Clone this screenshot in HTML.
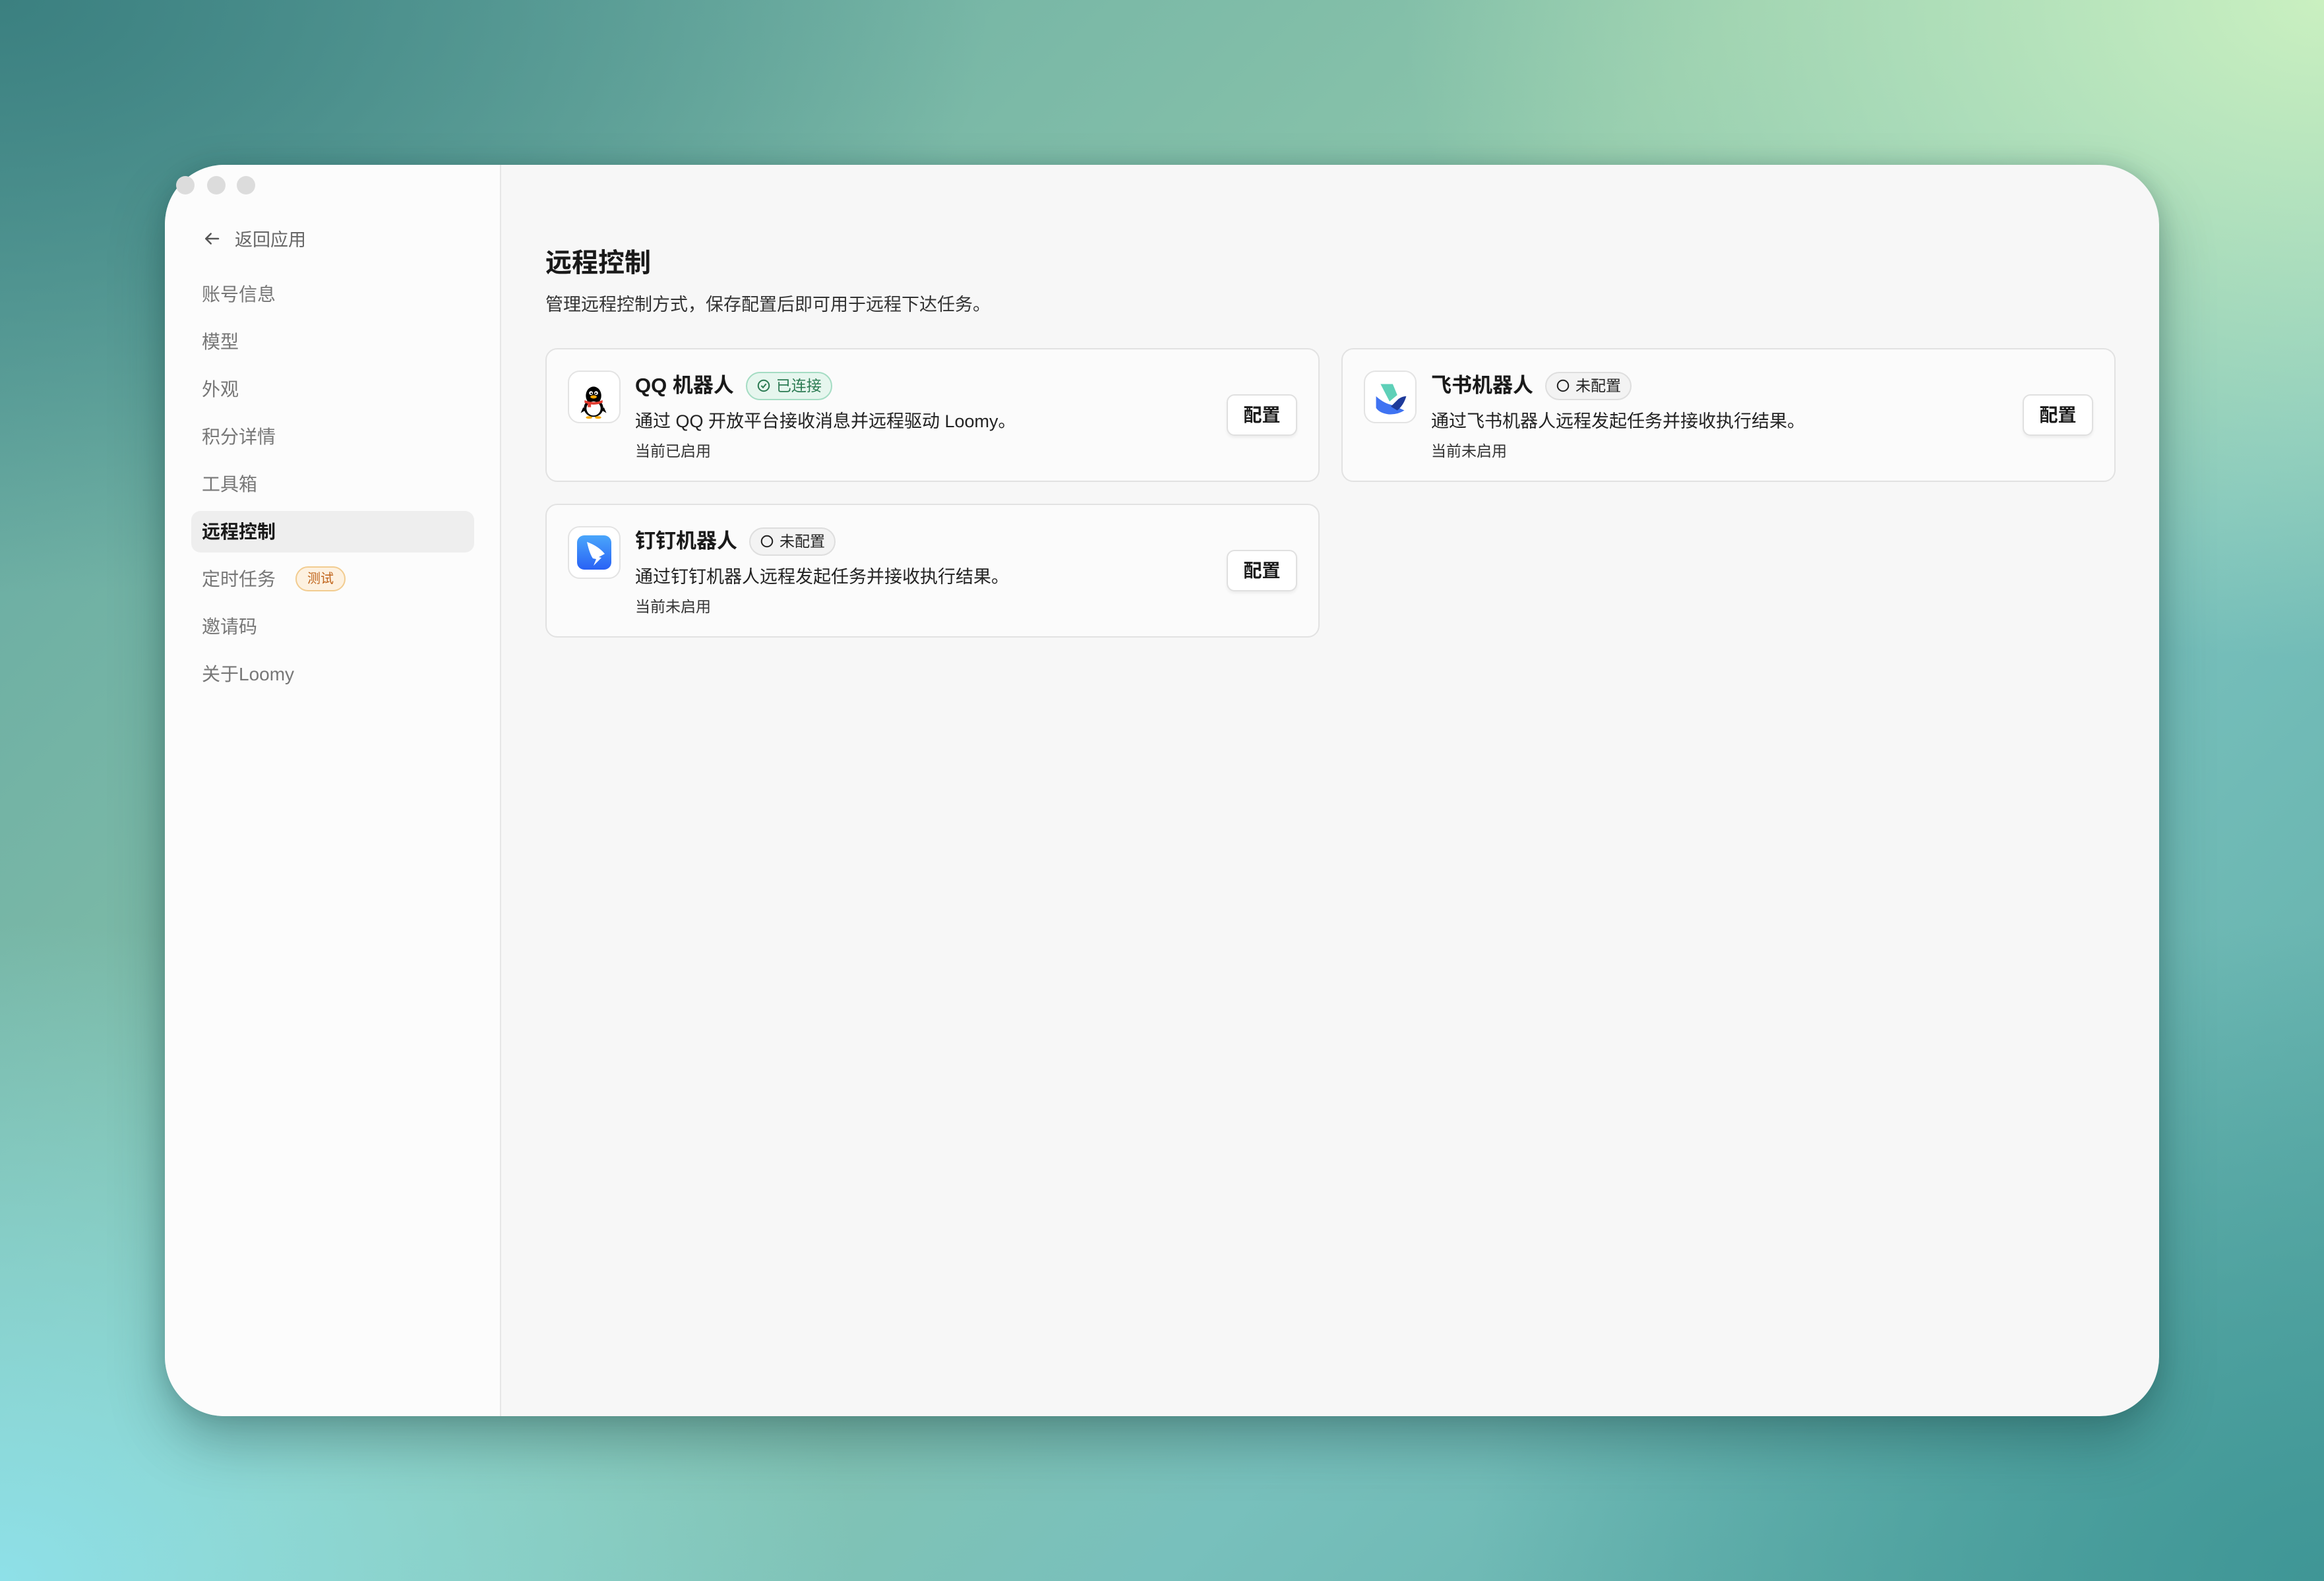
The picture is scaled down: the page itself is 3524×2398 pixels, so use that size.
<!DOCTYPE html>
<html><head><meta charset="utf-8"><style>
*{margin:0;padding:0;box-sizing:border-box}
html,body{width:3524px;height:2398px;overflow:hidden}
body{font-family:"Liberation Sans","Noto Sans CJK SC",sans-serif;position:relative;
background:
radial-gradient(ellipse 1400px 1000px at 3524px 0px,#caf0c0 0%,rgba(202,240,192,0) 100%),
radial-gradient(ellipse 1300px 1000px at 0px 2398px,#8ee0e8 0%,rgba(142,224,232,0) 100%),
radial-gradient(ellipse 1300px 1000px at 3524px 2398px,#3f9696 0%,rgba(63,150,150,0) 100%),
radial-gradient(ellipse 1500px 900px at 0px 0px,#3b8080 0%,rgba(59,128,128,0) 100%),
linear-gradient(135deg,#5fa4a0 0%,#8cc6ab 45%,#78c0bc 70%,#5aaaa4 100%);}
.win{position:absolute;left:250px;top:250px;width:3024px;height:1898px;border-radius:90px;overflow:hidden;background:#f7f7f7;box-shadow:0 40px 80px rgba(20,60,60,.35),0 0 30px rgba(20,60,60,.2)}
.side{position:absolute;left:0;top:0;width:510px;height:100%;background:#fcfcfc;border-right:2px solid #e6e6e6}
.dot{position:absolute;top:267px;width:28px;height:28px;border-radius:50%;background:#dcdcdc}
.back{position:absolute;left:56px;top:92px;font-size:27px;color:#666;display:flex;align-items:center;gap:20px}
.item{position:absolute;left:56px;font-size:28px;color:#777;line-height:40px}
.active{position:absolute;left:40px;top:525px;width:429px;height:63px;border-radius:14px;background:#eeeeee}
.tb{display:inline-block;margin-left:30px;font-size:20px;color:#c0641a;background:#fdf1e0;border:2px solid #f2cc90;border-radius:20px;padding:0 16px;line-height:34px;vertical-align:middle;position:relative;top:-3px}
h1{position:absolute;left:577px;top:116px;font-size:40px;color:#1a1a1a;font-weight:bold}
.sub{position:absolute;left:577px;top:190px;font-size:27px;color:#333}
.card{position:absolute;width:1174px;height:203px;border:2px solid #e2e2e2;border-radius:18px;background:#fbfbfb}
.ic{position:absolute;left:32px;top:32px;width:80px;height:80px;border:2px solid #e3e3e3;border-radius:18px;background:#fff;overflow:hidden}
.name{position:absolute;left:134px;top:32px;font-size:31px;color:#1a1a1a;font-weight:600;line-height:46px;display:flex;align-items:center}
.badge{margin-left:18px;font-size:23px;font-weight:normal;border-radius:24px;padding:0 14px;line-height:39px;display:flex;align-items:center;gap:8px}
.ok{background:#e6f6ee;border:2px solid #a4dcc3;color:#2b7a52}
.no{background:#f3f3f3;border:2px solid #dedede;color:#222}
.desc{position:absolute;left:134px;top:87px;font-size:27px;color:#222}
.st{position:absolute;left:134px;top:135px;font-size:23px;color:#333}
.btn{position:absolute;right:32px;top:68px;width:107px;height:63px;border:2px solid #e0e0e0;border-radius:12px;background:#fff;box-shadow:0 3px 5px rgba(0,0,0,.06);font-size:28px;font-weight:bold;color:#1a1a1a;text-align:center;line-height:59px}
</style></head><body>
<div class="win">
 <div class="side">
  <div class="back"><svg width="30" height="30" viewBox="0 0 24 24" fill="none" stroke="#555" stroke-width="2" stroke-linecap="round" stroke-linejoin="round"><path d="M20 12H5M11 6l-6 6 6 6"/></svg><span>返回应用</span></div>
  <div class="active"></div>
  <div class="item" style="top:177px">账号信息</div>
  <div class="item" style="top:249px">模型</div>
  <div class="item" style="top:321px">外观</div>
  <div class="item" style="top:393px">积分详情</div>
  <div class="item" style="top:465px">工具箱</div>
  <div class="item" style="top:537px;color:#1a1a1a;font-weight:600">远程控制</div>
  <div class="item" style="top:609px">定时任务<span class="tb">测试</span></div>
  <div class="item" style="top:681px">邀请码</div>
  <div class="item" style="top:753px">关于Loomy</div>
 </div>
 <h1>远程控制</h1>
 <div class="sub">管理远程控制方式，保存配置后即可用于远程下达任务。</div>

 <div class="card" style="left:577px;top:278px">
  <div class="ic"><svg width="78" height="78" viewBox="0 0 80 80">
   <ellipse cx="38" cy="56" rx="15" ry="14" fill="#000"/>
   <ellipse cx="38" cy="37" rx="12" ry="14" fill="#000"/>
   <ellipse cx="38" cy="57" rx="11" ry="11" fill="#fff"/>
   <path d="M22 55 L18 64 L25 60Z M54 55 L58 64 L51 60Z" fill="#000"/>
   <circle cx="34" cy="33" r="3" fill="#fff"/><circle cx="42" cy="33" r="3" fill="#fff"/>
   <circle cx="34.5" cy="33.5" r="1.3" fill="#000"/><circle cx="41.5" cy="33.5" r="1.3" fill="#000"/>
   <ellipse cx="38" cy="39" rx="5" ry="2.5" fill="#f6a800"/>
   <path d="M24 44 Q38 50 52 44 L52 48 Q38 54 24 48Z" fill="#e23a2e"/>
   <rect x="29" y="47" width="5" height="8" fill="#e23a2e"/>
   <ellipse cx="31" cy="71" rx="5" ry="2" fill="#f6a800"/><ellipse cx="45" cy="71" rx="5" ry="2" fill="#f6a800"/>
  </svg></div>
  <div class="name">QQ 机器人<span class="badge ok"><svg width="22" height="22" viewBox="0 0 24 24" fill="none" stroke="#2b7a52" stroke-width="2.2"><circle cx="12" cy="12" r="9"/><path d="M8 12l3 3 5-6"/></svg>已连接</span></div>
  <div class="desc">通过 QQ 开放平台接收消息并远程驱动 Loomy。</div>
  <div class="st">当前已启用</div>
  <div class="btn">配置</div>
 </div>

 <div class="card" style="left:1784px;top:278px">
  <div class="ic"><svg width="78" height="78" viewBox="0 0 80 80">
   <path d="M24 19 L43 19 L50 36 L38 46Z" fill="#5ed0b8"/>
   <path d="M17 38 Q30 50 44 52 L61 60 Q50 67 36 66 Q22 64 17 56Z" fill="#3f73f2"/>
   <path d="M40 54 L52 42 Q58 38 64 38 Q60 52 50 60Z" fill="#1e3a9a"/>
  </svg></div>
  <div class="name">飞书机器人<span class="badge no"><svg width="22" height="22" viewBox="0 0 24 24" fill="none" stroke="#222" stroke-width="2.2"><circle cx="12" cy="12" r="9"/></svg>未配置</span></div>
  <div class="desc">通过飞书机器人远程发起任务并接收执行结果。</div>
  <div class="st">当前未启用</div>
  <div class="btn">配置</div>
 </div>

 <div class="card" style="left:577px;top:514px">
  <div class="ic"><svg width="78" height="78" viewBox="0 0 78 78">
   <defs><linearGradient id="dg" x1="0" y1="0" x2="0" y2="1"><stop offset="0" stop-color="#4aa6fb"/><stop offset="1" stop-color="#2962f5"/></linearGradient></defs>
   <rect x="12" y="12" width="52" height="52" rx="11" fill="url(#dg)"/>
   <path d="M27 22 Q44 28 54 40 L45 45 L49 46 L37 58 L41 48 L36 47 Q31 40 27 22Z" fill="#fff"/>
  </svg></div>
  <div class="name">钉钉机器人<span class="badge no"><svg width="22" height="22" viewBox="0 0 24 24" fill="none" stroke="#222" stroke-width="2.2"><circle cx="12" cy="12" r="9"/></svg>未配置</span></div>
  <div class="desc">通过钉钉机器人远程发起任务并接收执行结果。</div>
  <div class="st">当前未启用</div>
  <div class="btn">配置</div>
 </div>
</div>
<div class="dot" style="left:267px"></div>
<div class="dot" style="left:314px"></div>
<div class="dot" style="left:359px"></div>
</body></html>
